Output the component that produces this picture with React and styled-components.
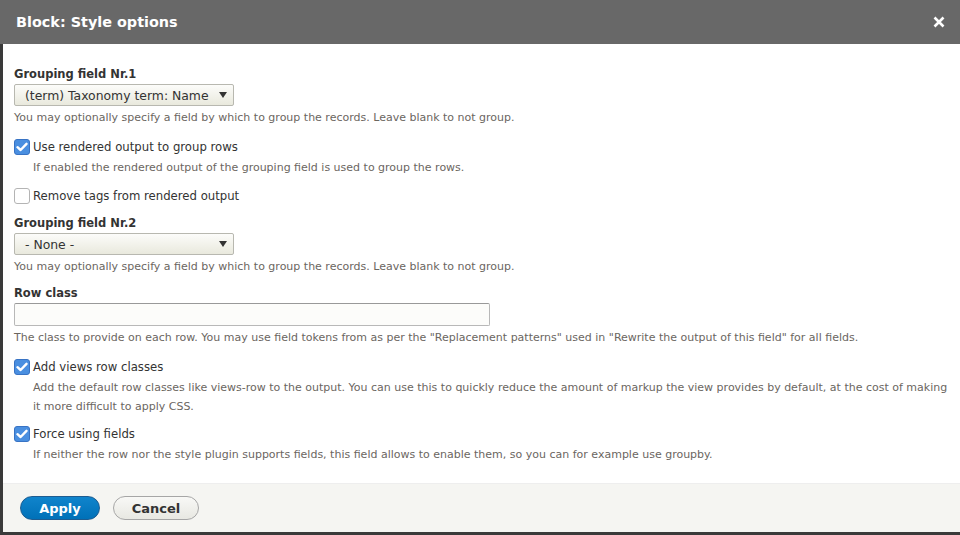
import React from "react";
import styled, { createGlobalStyle } from "styled-components";

const GlobalStyle = createGlobalStyle`
	html, body {
		margin: 0;
		padding: 0;
		background: #3a3a3a;
	}
	body {
		font-family: "DejaVu Sans", "Liberation Sans", sans-serif;
		color: #333;
		width: 960px;
		height: 535px;
		overflow: hidden;
	}
`;

const Dialog = styled.div`
	width: 960px;
	height: 532px;
	display: flex;
	flex-direction: column;
`;

const TitleBar = styled.div`
	height: 44px;
	flex-shrink: 0;
	background: #686868;
	display: flex;
	align-items: center;
	justify-content: space-between;
	padding: 0 14px 0 16px;
	box-sizing: border-box;
`;

const Title = styled.h1`
	margin: 0;
	font-size: 14.4px;
	font-weight: bold;
	color: #fff;
`;

const Close = styled.button`
	border: 0;
	background: none;
	padding: 0;
	width: 14px;
	height: 14px;
	display: flex;
	align-items: center;
	justify-content: center;
	cursor: pointer;
`;

const Body = styled.div`
	flex-grow: 1;
	background: #fff;
	margin-left: 3px;
	padding: 22px 6px 0 11px;
`;

const Label = styled.div`
	font-size: 11.5px;
	font-weight: bold;
	line-height: 16px;
	margin-bottom: 2px;
`;

const Field = styled.div`
	margin-bottom: ${(p) => p.gap || 0}px;
`;

const SelectBox = styled.div`
	width: 220px;
	height: 22px;
	box-sizing: border-box;
	border: 1px solid #b8b8b0;
	border-radius: 2px;
	background: linear-gradient(#fcfcfa, #e9e9dd);
	display: flex;
	align-items: center;
	justify-content: space-between;
	padding: 0 6px 0 10px;
	font-size: 12.4px;
	color: #333;
`;

const Arrow = styled.span`
	width: 0;
	height: 0;
	border-left: 4px solid transparent;
	border-right: 4px solid transparent;
	border-top: 6px solid #333;
`;

const TextInput = styled.div`
	width: 476px;
	height: 23px;
	box-sizing: border-box;
	border: 1px solid #b8b8b8;
	border-top-color: #999;
	border-radius: 2px;
	background: #fcfcfa;
`;

const Description = styled.div`
	font-size: 11px;
	line-height: 19px;
	color: #6b665f;
	margin-top: ${(p) => p.top || 2}px;
	padding-left: ${(p) => (p.indent ? 19 : 0)}px;
`;

const CheckRow = styled.label`
	display: flex;
	align-items: center;
	gap: 3px;
	font-size: 11.7px;
	line-height: 18px;
`;

const Box = styled.span`
	width: 16px;
	height: 16px;
	box-sizing: border-box;
	border-radius: 3px;
	border: 1px solid ${(p) => (p.checked ? "#3873c4" : "#b4b4b4")};
	background: ${(p) => (p.checked ? "#4a8fe0" : "#fff")};
	display: flex;
	align-items: center;
	justify-content: center;
	flex-shrink: 0;
`;

const Footer = styled.div`
	height: 48px;
	flex-shrink: 0;
	background: #f5f5f2;
	margin-left: 3px;
	border-top: 1px solid #eee;
	display: flex;
	align-items: center;
	gap: 13px;
	padding: 0 17px;
`;

const Button = styled.button`
	height: 24px;
	width: ${(p) => p.w}px;
	border-radius: 12px;
	font-family: "DejaVu Sans", sans-serif;
	font-size: 13px;
	font-weight: bold;
	padding: 0;
	cursor: pointer;
	color: ${(p) => (p.primary ? "#fff" : "#333")};
	background: ${(p) => (p.primary ? "linear-gradient(#1084cc, #0071b8)" : "linear-gradient(#f8f8f6, #e8e8e2)")};
	border: 1px solid ${(p) => (p.primary ? "#1e5c90" : "#a6a6a6")};
`;

function Check({ checked }) {
	return (
		<Box checked={checked}>
			{checked && (
				<svg width="12" height="10" viewBox="0 0 12 10">
					<path d="M1.5 5.2 L4.6 8 L10.5 1.8" fill="none" stroke="#fff" strokeWidth="2.4" strokeLinecap="round" strokeLinejoin="round" />
				</svg>
			)}
		</Box>
	);
}

function Select({ value }) {
	return (
		<SelectBox>
			<span>{value}</span>
			<Arrow />
		</SelectBox>
	);
}

export default function App() {
	return (
		<Dialog>
			<GlobalStyle />
			<TitleBar>
				<Title>Block: Style options</Title>
				<Close aria-label="Close">
					<svg width="12" height="12" viewBox="0 0 12 12">
						<path d="M1.5 1.5 L10.5 10.5 M10.5 1.5 L1.5 10.5" stroke="#fff" strokeWidth="2.6" />
					</svg>
				</Close>
			</TitleBar>
			<Body>
				<Field gap={11}>
					<Label>Grouping field Nr.1</Label>
					<Select value="(term) Taxonomy term: Name" />
					<Description>You may optionally specify a field by which to group the records. Leave blank to not group.</Description>
				</Field>
				<Field gap={10}>
					<CheckRow><Check checked />Use rendered output to group rows</CheckRow>
					<Description indent>If enabled the rendered output of the grouping field is used to group the rows.</Description>
				</Field>
				<Field gap={10}>
					<CheckRow><Check />Remove tags from rendered output</CheckRow>
				</Field>
				<Field gap={9}>
					<Label>Grouping field Nr.2</Label>
					<Select value="- None -" />
					<Description>You may optionally specify a field by which to group the records. Leave blank to not group.</Description>
				</Field>
				<Field gap={11}>
					<Label>Row class</Label>
					<TextInput />
					<Description>The class to provide on each row. You may use field tokens from as per the "Replacement patterns" used in "Rewrite the output of this field" for all fields.</Description>
				</Field>
				<Field gap={9}>
					<CheckRow><Check checked />Add views row classes</CheckRow>
					<Description indent>Add the default row classes like views-row to the output. You can use this to quickly reduce the amount of markup the view provides by default, at the cost of making it more difficult to apply CSS.</Description>
				</Field>
				<Field>
					<CheckRow><Check checked />Force using fields</CheckRow>
					<Description indent>If neither the row nor the style plugin supports fields, this field allows to enable them, so you can for example use groupby.</Description>
				</Field>
			</Body>
			<Footer>
				<Button primary w={80}>Apply</Button>
				<Button w={86}>Cancel</Button>
			</Footer>
		</Dialog>
	);
}
